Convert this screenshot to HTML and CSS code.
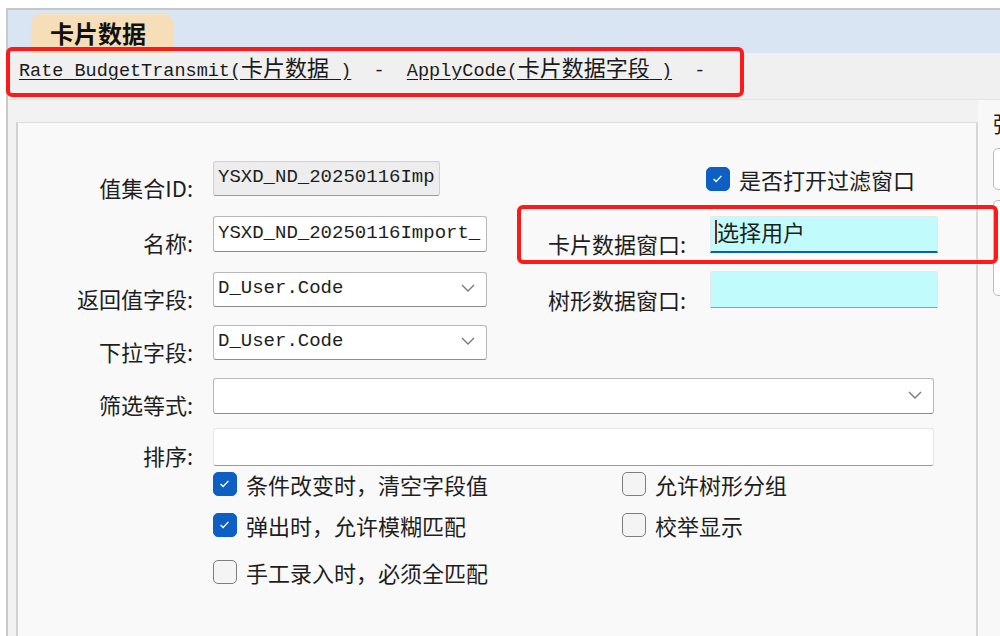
FILE: index.html
```html
<!DOCTYPE html>
<html lang="zh-CN">
<head>
    <meta charset="UTF-8">
    <title>卡片数据</title>
    <link rel="stylesheet" href="styles.css">
</head>
<body>
    <div class="window">
        <div class="tabbar">
            <div class="tab">卡片数据</div>
        </div>
        <div class="crumbs"><a>Rate BudgetTransmit(<span class="cjk">卡片数据</span> )</a><span class="sep">  -  </span><a>ApplyCode(<span class="cjk">卡片数据字段</span> )</a><span class="sep">  -</span></div>
        <div class="main">
            <div class="panel">
                <!-- 值集合ID -->
                <div class="row r1">
                    <div class="left">
                        <div class="label">值集合ID:</div>
                        <div class="input readonly w-id">YSXD_ND_20250116Imp</div>
                    </div>
                    <div class="right right-check">
                        <label class="check"><span class="box on"><svg viewBox="0 0 24 24"><polyline points="7.5,12.5 10.5,15.5 16.5,9"/></svg></span>是否打开过滤窗口</label>
                    </div>
                </div>
                <!-- 名称 -->
                <div class="row r2">
                    <div class="left">
                        <div class="label">名称:</div>
                        <div class="input w-half">YSXD_ND_20250116Import_</div>
                    </div>
                    <div class="right">
                        <div class="rlabel">卡片数据窗口:</div>
                        <div class="pick active"><span class="caret"></span>选择用户</div>
                    </div>
                </div>
                <!-- 返回值字段 -->
                <div class="row r3">
                    <div class="left">
                        <div class="label">返回值字段:</div>
                        <div class="input select w-half">D_User.Code<svg class="chev" viewBox="0 0 14 8"><polyline points="1,1 7,7 13,1"/></svg></div>
                    </div>
                    <div class="right">
                        <div class="rlabel">树形数据窗口:</div>
                        <div class="pick"></div>
                    </div>
                </div>
                <!-- 下拉字段 -->
                <div class="row r4">
                    <div class="left">
                        <div class="label">下拉字段:</div>
                        <div class="input select w-half">D_User.Code<svg class="chev" viewBox="0 0 14 8"><polyline points="1,1 7,7 13,1"/></svg></div>
                    </div>
                </div>
                <div class="row r5">
                    <div class="label">筛选等式:</div>
                    <div class="input select w-full"><span></span><svg class="chev" viewBox="0 0 14 8"><polyline points="1,1 7,7 13,1"/></svg></div>
                </div>
                <div class="row r6">
                    <div class="label">排序:</div>
                    <div class="input plain w-full"></div>
                </div>

                <div class="checks c1">
                    <label class="check col1"><span class="box on"><svg viewBox="0 0 24 24"><polyline points="7.5,12.5 10.5,15.5 16.5,9"/></svg></span>条件改变时，清空字段值</label>
                    <label class="check"><span class="box"></span>允许树形分组</label>
                </div>
                <div class="checks c2">
                    <label class="check col1"><span class="box on"><svg viewBox="0 0 24 24"><polyline points="7.5,12.5 10.5,15.5 16.5,9"/></svg></span>弹出时，允许模糊匹配</label>
                    <label class="check"><span class="box"></span>校举显示</label>
                </div>
                <div class="checks c3">
                    <label class="check col1"><span class="box"></span>手工录入时，必须全匹配</label>
                </div>
            </div>
            <div class="side">
                <div class="side-title">弹</div>
                <div class="side-box b1"></div>
                <div class="side-box b2"></div>
            </div>
        </div>
    </div>

    <div class="mark mark-crumbs"></div>
    <div class="mark mark-card"></div>
</body>
</html>
```

FILE: styles.css
```css
* {
    box-sizing: border-box;
}
body {
    margin: 0;
    width: 1000px;
    height: 636px;
    overflow: hidden;
    background: #fff;
    font-family: "Noto Sans CJK SC", sans-serif;
    color: #1e1e1e;
}
.window {
    margin: 8px 0 0 6px;
    height: 628px;
    border-top: 2px solid #c6c6c6;
    border-left: 2px solid #cacaca;
    display: flex;
    flex-direction: column;
}
.tabbar {
    height: 43px;
    flex: none;
    background: #d9e5f2;
    padding: 3px 0 0 23px;
}
.tab {
    width: 142px;
    height: 40px;
    background: #f6dfb8;
    clip-path: polygon(7px 0, calc(100% - 7px) 0, 100% 7px, 100% 100%, 0 100%, 0 7px);
    font-size: 24px;
    font-weight: bold;
    line-height: 40px;
    padding-left: 19px;
    color: #111;
}
.crumbs {
    height: 47px;
    flex: none;
    background: #f0f0f0;
    border-bottom: 1px solid #e3e3e3;
    padding: 2px 0 0 11px;
    font-family: "Liberation Mono", monospace;
    font-size: 18.5px;
    line-height: 28px;
    white-space: nowrap;
    color: #1a1a1a;
}
.crumbs a {
    text-decoration: underline;
    text-underline-offset: 3px;
}
.crumbs .sep {
    white-space: pre;
}
.crumbs .cjk {
    font-family: "Noto Sans CJK SC", sans-serif;
    font-size: 22px;
    line-height: 1;
}
.main {
    flex: 1;
    display: flex;
    background: #f2f2f2;
    padding-left: 8px;
}
.panel {
    width: 962px;
    flex: none;
    margin-top: 22px;
    background: #f9f9f9;
    border-top: 1px solid #dedede;
    border-left: 2px solid #d2d2d2;
    border-right: 2px solid #d8d8d8;
    padding-top: 38px;
}
.row {
    display: flex;
    align-items: center;
    height: 35px;
}
.r2 { margin-top: 20px; height: 36px; }
.r3 { margin-top: 20px; }
.r4 { margin-top: 18px; }
.r5 { margin-top: 18px; height: 36px; }
.r6 { margin-top: 14px; height: 38px; }
.left {
    display: flex;
    align-items: center;
    width: 469px;
    height: 100%;
}
.label {
    width: 175px;
    margin-right: 20px;
    text-align: right;
    font-size: 22px;
    line-height: 26px;
    padding-top: 16px;
    white-space: nowrap;
}
.input {
    height: 100%;
    display: flex;
    align-items: center;
    justify-content: space-between;
    padding: 0 4px 3px;
    background: #fff;
    border: 1px solid #b8b8b8;
    border-bottom-color: #8c8c8c;
    border-radius: 3px;
    font-family: "Liberation Mono", monospace;
    font-size: 19px;
    white-space: nowrap;
    overflow: hidden;
    color: #1e1e1e;
}
.input.readonly {
    background: #ededed;
    border-color: #d0d0d0;
    border-bottom-color: #9c9c9c;
}
.input.plain {
    border-color: #e6e6e6;
    border-bottom-color: #9a9a9a;
}
.w-id { width: 227px; }
.w-half { width: 274px; }
.w-full { width: 721px; }
.select {
    padding-right: 11px;
}
.chev {
    width: 14px;
    height: 8px;
    flex: none;
    fill: none;
    stroke: #7a7a7a;
    stroke-width: 1.4;
}
.right {
    display: flex;
    align-items: center;
    height: 100%;
    margin-left: 61px;
}
.right-check {
    margin-left: 219px;
}
.rlabel {
    width: 162px;
    font-size: 22px;
    line-height: 26px;
    padding-top: 18px;
    white-space: nowrap;
}
.pick {
    width: 228px;
    height: 37px;
    flex: none;
    background: #c1fbfb;
    border: 1px solid #e4e8e8;
    border-bottom: 1px solid #9a9a9a;
    border-radius: 3px 3px 0 0;
    font-size: 22px;
    line-height: 28px;
    padding-left: 4px;
    display: flex;
    align-items: flex-start;
}
.pick.active {
    border-bottom: 2px solid #0b5ec0;
}
.caret {
    width: 2px;
    height: 24px;
    margin-top: 3px;
    background: #6a2a2a;
}
.checks {
    display: flex;
    height: 24px;
    padding-left: 195px;
}
.c1 { margin-top: 6px; }
.c2 { margin-top: 17px; }
.c3 { margin-top: 23px; }
.check {
    display: flex;
    align-items: center;
    gap: 9px;
    font-size: 22px;
    line-height: 24px;
    white-space: nowrap;
}
.col1 {
    width: 409px;
}
.box {
    width: 24px;
    height: 24px;
    flex: none;
    border: 1.5px solid #7e7e7e;
    border-radius: 5px;
    background: #f4f4f4;
}
.box.on {
    background: #0d5fc4;
    border-color: #0d5fc4;
}
.box svg {
    display: block;
    width: 21px;
    height: 21px;
    fill: none;
    stroke: #fff;
    stroke-width: 1.6;
}
.side {
    flex: 1;
    background: #f8f8f8;
    padding: 9px 0 0 15px;
    overflow: hidden;
}
.side-title {
    font-size: 22px;
    line-height: 26px;
    white-space: nowrap;
}
.side-box {
    width: 200px;
    background: #fff;
    border: 1px solid #bdbdbd;
    border-radius: 5px;
}
.b1 { margin-top: 13px; height: 42px; }
.b2 { margin-top: 10px; height: 96px; }
.mark {
    position: absolute;
    border: 4px solid #ff1a1a;
    border-radius: 6px;
}
.mark-crumbs {
    left: 6px;
    top: 47px;
    width: 738px;
    height: 50px;
}
.mark-card {
    left: 517px;
    top: 205px;
    width: 481px;
    height: 59px;
}
```
